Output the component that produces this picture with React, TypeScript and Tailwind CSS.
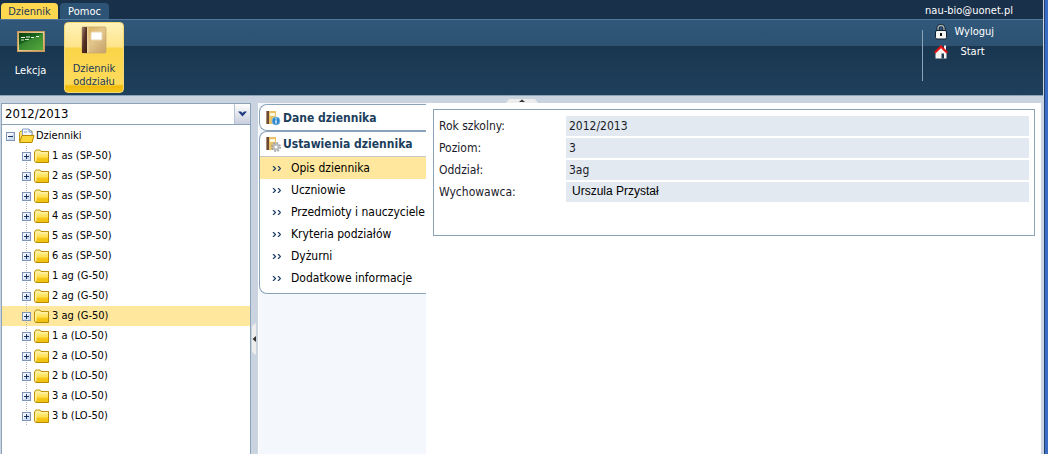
import React from 'react';

const years = ['2012/2013'];

const classes = [
  '1 as (SP-50)',
  '2 as (SP-50)',
  '3 as (SP-50)',
  '4 as (SP-50)',
  '5 as (SP-50)',
  '6 as (SP-50)',
  '1 ag (G-50)',
  '2 ag (G-50)',
  '3 ag (G-50)',
  '1 a (LO-50)',
  '2 a (LO-50)',
  '2 b (LO-50)',
  '3 a (LO-50)',
  '3 b (LO-50)',
];

const settings = [
  'Opis dziennika',
  'Uczniowie',
  'Przedmioty i nauczyciele',
  'Kryteria podziałów',
  'Dyżurni',
  'Dodatkowe informacje',
];

const fields = [
  { label: 'Rok szkolny:', value: '2012/2013' },
  { label: 'Poziom:', value: '3' },
  { label: 'Oddział:', value: '3ag' },
  { label: 'Wychowawca:', value: 'Urszula Przystał' },
];

function BoardIcon() {
  return (
    <svg width="28" height="22" viewBox="0 0 28 22" aria-hidden="true">
      <defs>
        <linearGradient id="board" x1="0" y1="0" x2="1" y2="1">
          <stop offset="0" stopColor="#0a3f10" />
          <stop offset="0.5" stopColor="#1c7020" />
          <stop offset="1" stopColor="#3f9a2c" />
        </linearGradient>
        <linearGradient id="frame" x1="0" y1="0" x2="1" y2="1">
          <stop offset="0" stopColor="#d2a56a" />
          <stop offset="0.5" stopColor="#ecd09a" />
          <stop offset="1" stopColor="#c89a58" />
        </linearGradient>
      </defs>
      <rect x="0.500" y="1.500" width="27" height="20" fill="url(#frame)" stroke="#c79a5e" strokeWidth="1" />
      <rect x="2" y="3" width="24" height="17" fill="url(#board)" />
      <path d="M2 15L26 3V20H2Z" fill="#8bd060" opacity="0.28" />
      <path d="M4 7.500h4M9 7h4M14 7.500h3M19 6.500h3" stroke="#eef7ea" strokeWidth="1.200" />
      <path d="M4 10h3M8 9.500h4" stroke="#cfe6c8" />
    </svg>
  );
}

function BookIcon() {
  return (
    <svg width="26" height="28" viewBox="0 0 26 28" aria-hidden="true">
      <defs>
        <linearGradient id="spine" x1="0" y1="0" x2="1" y2="1">
          <stop offset="0" stopColor="#a08478" />
          <stop offset="0.45" stopColor="#5a3628" />
          <stop offset="1" stopColor="#3a1a10" />
        </linearGradient>
        <linearGradient id="cover" x1="0" y1="0" x2="1" y2="1">
          <stop offset="0" stopColor="#dcae50" />
          <stop offset="0.5" stopColor="#e3c68c" />
          <stop offset="1" stopColor="#c4a068" />
        </linearGradient>
      </defs>
      <rect x="1" y="1" width="24" height="26" rx="1" fill="url(#cover)" stroke="#c8aa6c" strokeWidth="0.800" />
      <rect x="1" y="1" width="5" height="26" fill="url(#spine)" />
      <path d="M6 1h1.500v26H6Z" fill="#f0dcae" opacity="0.7" />
      <rect x="10" y="6" width="11" height="8" rx="1" fill="#fff" stroke="#ead9ae" />
    </svg>
  );
}

function LockIcon() {
  return (
    <svg width="14" height="16" viewBox="0 0 14 16" aria-hidden="true">
      <path d="M4 8V4.500a3 3 0 0 1 6 0V8" fill="none" stroke="#10202e" strokeWidth="3.200" />
      <path d="M4 8V4.500a3 3 0 0 1 6 0V8" fill="none" stroke="#a9b2b8" strokeWidth="1.300" />
      <rect x="1.500" y="6.500" width="11" height="8.500" rx="1.500" fill="#f4f4f2" stroke="#10202e" />
      <rect x="6" y="9" width="2" height="3" fill="#111" />
    </svg>
  );
}

function HouseIcon() {
  return (
    <svg width="14" height="14" viewBox="0 0 14 14" aria-hidden="true">
      <path d="M10 0.500h2v5h-2Z" fill="#f1efec" />
      <path d="M1.500 7L7 1.500L12.500 7V13.500H1.500Z" fill="#f6f4f1" />
      <path d="M7.500 8.500h2.500v5h-2.500Z" fill="#243b4c" />
      <path d="M0.700 7.800L7 1.600L13.300 7.800" fill="none" stroke="#e01414" strokeWidth="2.200" />
    </svg>
  );
}

function Expander({ open }: { open?: boolean }) {
  return (
    <svg width="9" height="9" viewBox="0 0 9 9" className="shrink-0" aria-hidden="true">
      <rect x="0.500" y="0.500" width="8" height="8" fill="#cfdcf0" stroke="#7e95b8" />
      <path d="M1 1h7L1 8Z" fill="#fff" opacity="0.7" />
      <path d={open ? 'M2 4.500h5' : 'M2 4.500h5M4.500 2v5'} stroke="#1b3560" />
    </svg>
  );
}

function FolderIcon() {
  return (
    <svg width="16" height="14" viewBox="0 0 16 14" className="shrink-0" aria-hidden="true">
      <defs>
        <linearGradient id="folder" x1="0" y1="0" x2="0" y2="1">
          <stop offset="0" stopColor="#ffe97a" />
          <stop offset="0.450" stopColor="#ffdf50" />
          <stop offset="0.500" stopColor="#f8c81c" />
          <stop offset="1" stopColor="#eec010" />
        </linearGradient>
      </defs>
      <path d="M0.500 12V3L2 1h4l1 1.500h7.500v10.500h-13Z" fill="#fff0a0" stroke="#c09408" />
      <path d="M2.500 4.500h11.500v8.500H2.500Z" fill="url(#folder)" />
      <path d="M14.500 2.500v11H1.500" fill="none" stroke="#b88a00" />
    </svg>
  );
}

function OpenFolderIcon() {
  return (
    <svg width="17" height="16" viewBox="0 0 17 16" className="shrink-0" aria-hidden="true">
      <path d="M1.500 13V4.500L3 3h11v9Z" fill="#fbe27a" stroke="#c09408" />
      <path d="M4.500 8V1H11l3 3v4Z" fill="#f4f8fd" stroke="#86a0c4" />
      <path d="M6 4h3M11 1v3h3" fill="none" stroke="#7f9cc6" />
      <path d="M1.500 14.500L4 7.500h12l-2 7Z" fill="#fbd638" stroke="#b88a00" />
    </svg>
  );
}

function BookBadge({ kind }: { kind: 'info' | 'gear' }) {
  return (
    <svg width="16" height="16" viewBox="0 0 16 16" className="shrink-0" aria-hidden="true">
      <rect x="1" y="1" width="10" height="13" fill="#e9c266" />
      <rect x="1" y="1" width="3" height="13" fill="#6b4a36" />
      <path d="M1 1h1v13h-1Z" fill="#a98b76" />
      <rect x="5" y="3" width="5" height="3" fill="#fff6dc" />
      {kind === 'info' ? (
        <>
          <circle cx="11" cy="11" r="4" fill="#2b86cc" stroke="#8ec3ea" strokeWidth="0.800" />
          <path d="M11 8.300v1.200M11 10.300v3.200" stroke="#fff" strokeWidth="1.300" />
        </>
      ) : (
        <>
          <circle cx="11" cy="11" r="4" fill="none" stroke="#9a9ea3" strokeWidth="2" strokeDasharray="1.600 1.540" />
          <circle cx="11" cy="11" r="2.500" fill="#fff" stroke="#b4b8bc" strokeWidth="1.800" />
        </>
      )}
    </svg>
  );
}

function DoubleChevron() {
  return (
    <svg width="9" height="5" viewBox="0 0 9 5" className="shrink-0" aria-hidden="true">
      <path d="M1 0L3.500 2.500L1 5M6 0L8.500 2.500L6 5" fill="none" stroke="#1c3e66" strokeWidth="1.200" />
    </svg>
  );
}

function Header() {
  return (
    <header className="border-b border-[#8aa3b9] bg-[#19304a] text-[11px] text-white">
      <div className="flex h-[19px] items-end justify-between">
        <nav className="flex gap-0.5 px-px">
          <button type="button" className="h-4 w-[57px] rounded-t bg-[#ffd850] leading-[17px] text-[#1f3a55]">
            Dziennik
          </button>
          <button type="button" className="h-4 w-[49px] rounded-t bg-[#2e5475] leading-[17px]">
            Pomoc
          </button>
        </nav>
        <span className="mr-[30px] leading-[17px]">nau-bio@uonet.pl</span>
      </div>
      <div className="flex justify-between border-t border-[#54789a] bg-[linear-gradient(to_bottom,#31587a_0,#2d5272_26px,#1a364f_26px,#1e405c_100%)]">
        <div className="flex gap-[3px] py-0.5">
          <button type="button" className="flex h-[71px] w-[61px] flex-col items-center pt-2 leading-[13px]">
            <BoardIcon />
            <span className="mt-3">Lekcja</span>
          </button>
          <button
            type="button"
            className="flex h-[71px] w-[60px] flex-col items-center rounded border border-[#f4d878] bg-[linear-gradient(to_bottom,#fff3b8_0,#fee48a_24px,#fbd548_25px,#fddb5c_88%,#f0bc0c_92%,#f4c61c_100%)] pt-[3px] leading-[13px] text-[#1f3a55]"
          >
            <BookIcon />
            <span className="mt-2">
              Dziennik
              <br />
              oddziału
            </span>
          </button>
        </div>
        <div className="mt-2.5 mr-[49px] flex h-[51px] border-l border-[#8aa3b9] pl-[11px]">
          <div className="-mt-2 flex flex-col">
            <a href="#wyloguj" className="flex h-5 items-center">
              <LockIcon />
              <span className="ml-1.5">Wyloguj</span>
            </a>
            <a href="#start" className="flex h-5 items-center">
              <HouseIcon />
              <span className="ml-3">Start</span>
            </a>
          </div>
        </div>
      </div>
    </header>
  );
}

function Tree() {
  return (
    <aside className="flex w-[250px] shrink-0 flex-col border-r border-[#8aa3b9] bg-white">
      <div className="relative">
        <select
          aria-label="Rok szkolny"
          className="block h-[22px] w-full appearance-none border border-[#8aa3b9] bg-white pl-[3px] text-[13px] text-black"
        >
          {years.map((y) => (
            <option key={y}>{y}</option>
          ))}
        </select>
        <span className="pointer-events-none absolute top-px right-0 flex h-5 w-4 items-center justify-center border-l border-[#b8c4d4] bg-linear-to-b from-white to-[#c9cede]">
          <svg width="9" height="6" viewBox="0 0 9 6" aria-hidden="true">
            <path d="M0 0.500h3l1.500 1.500l1.500-1.500h3L4.500 5.500Z" fill="#1f3d80" />
          </svg>
        </span>
      </div>
      <ul className="flex-1 border-l border-[#8aa3b9] pt-px text-[11px] text-black">
        <li>
          <div className="flex h-5 items-center pl-1">
            <Expander open />
            <span className="ml-[3px] flex items-center gap-px">
              <OpenFolderIcon />
              Dzienniki
            </span>
          </div>
          <ul>
            {classes.map((c) => (
              <li
                key={c}
                className={c === '3 ag (G-50)' ? 'flex h-5 bg-[#ffe89e] pl-5' : 'flex h-5 pl-5'}
              >
                <div className="flex items-center bg-[linear-gradient(to_bottom,#b8b8b8_50%,transparent_50%)] bg-[length:1px_2px] bg-[position:4px_0] bg-repeat-y">
                  <Expander />
                  <span className="ml-[3px] flex items-center gap-0.5">
                    <FolderIcon />
                    {c}
                  </span>
                </div>
              </li>
            ))}
          </ul>
        </li>
      </ul>
    </aside>
  );
}

function SideNav() {
  return (
    <nav className="w-[168px] shrink-0 border-l border-white bg-[#f4f8fc] pt-px text-[12px] text-black">
      <section className="rounded-l-lg border border-r-0 border-[#8aa3b9] bg-white">
        <h2 className="flex h-[25px] items-center gap-0.5 pl-[5px] font-bold text-[#1c3e5c]">
          <BookBadge kind="info" />
          Dane dziennika
        </h2>
      </section>
      <section className="overflow-hidden rounded-l-lg border border-r-0 border-[#8aa3b9] bg-white">
        <h2 className="flex h-[25px] items-center gap-0.5 border-b border-[#c8c8c8] pl-[5px] font-bold whitespace-nowrap text-[#1c3e5c]">
          <BookBadge kind="gear" />
          Ustawienia dziennika
        </h2>
        <ul className="pb-1">
          {settings.map((s, i) => (
            <li key={s}>
              <a
                href="#ustawienia"
                className={
                  i === 0
                    ? 'flex h-[22px] items-center gap-2.5 bg-[#ffe89e] pl-3 whitespace-nowrap'
                    : 'flex h-[22px] items-center gap-2.5 pl-3 whitespace-nowrap'
                }
              >
                <DoubleChevron />
                {s}
              </a>
            </li>
          ))}
        </ul>
      </section>
    </nav>
  );
}

export default function App() {
  return (
    <div className="flex min-h-screen bg-[#cad4e1] font-['DejaVu_Sans_Condensed','Noto_Sans',sans-serif]">
      <div className="flex min-w-0 flex-1 flex-col">
        <Header />
        <div className="relative h-[7px]">
          <svg width="32" height="4" viewBox="0 0 32 4" className="absolute bottom-0 left-1/2 -ml-4" aria-hidden="true">
            <path d="M3 0h26l3 4H0Z" fill="#ededed" />
            <path d="M16 0.500l3 2.500h-6Z" fill="#333" />
          </svg>
        </div>
        <div className="flex flex-1 pr-0.5 pl-px">
          <Tree />
          <div className="flex w-[7px] shrink-0 items-start pl-px">
            <svg width="4" height="32" viewBox="0 0 4 32" className="mt-[220px]" aria-hidden="true">
              <path d="M4 0v32L0 29V3Z" fill="#ededed" />
              <path d="M4 13v6L0.500 16Z" fill="#333" />
            </svg>
          </div>
          <SideNav />
          <main className="min-w-0 flex-1 bg-white py-1.5 pr-1.5 pl-[7px]">
            <dl className="flex flex-col gap-0.5 border border-[#8aa3b9] px-[5px] pt-1.5 pb-[33px] text-[12px] text-[#1a1a2a]">
              {fields.map((f, i) => (
                <div key={f.label} className="flex h-5 items-center">
                  <dt className="w-[127px] shrink-0">{f.label}</dt>
                  <dd
                    className={
                      i === 3
                        ? "h-5 flex-1 bg-[#e2e9f0] pl-1.5 font-['Liberation_Sans',sans-serif] leading-[18px] text-black"
                        : 'h-5 flex-1 bg-[#e2e9f0] pl-[3px] leading-5'
                    }
                  >
                    {f.value}
                  </dd>
                </div>
              ))}
            </dl>
          </main>
        </div>
      </div>
      <div className="ml-px w-1 shrink-0 border-l border-[#24406e] bg-[#3b6cc4]" />
    </div>
  );
}
